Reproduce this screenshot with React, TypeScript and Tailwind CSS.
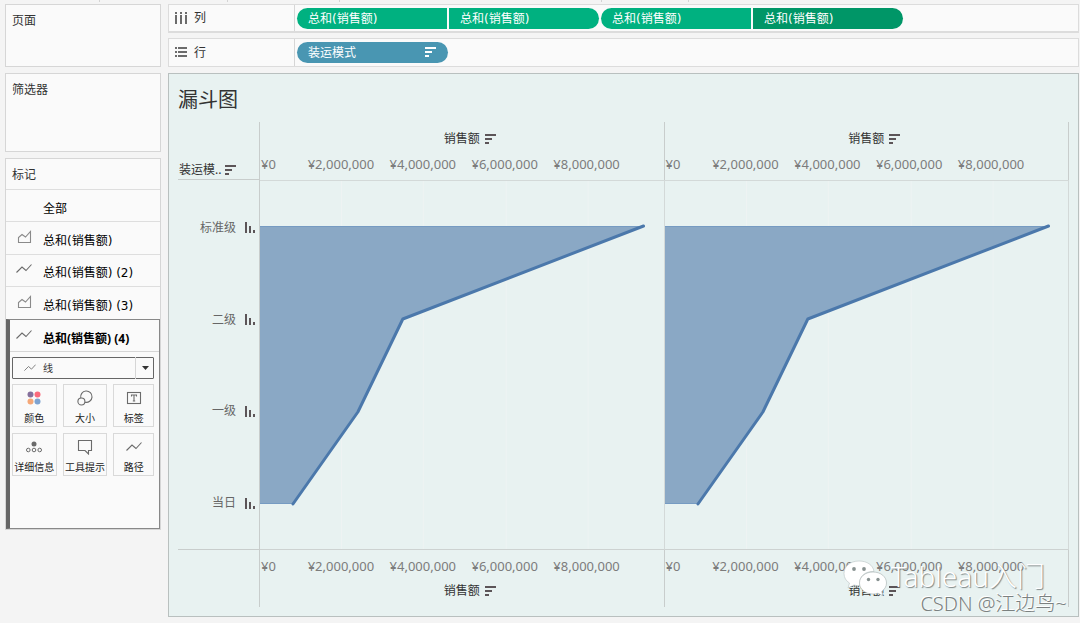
interface MarkCard {
  label: string;
  kind?: "area" | "line";
}

const markCards: MarkCard[] = [
  { label: "全部" },
  { label: "总和(销售额)", kind: "area" },
  { label: "总和(销售额) (2)", kind: "line" },
  { label: "总和(销售额) (3)", kind: "area" },
];

const columnPills = [
  { id: 1, className: "rounded-l-full bg-[#00b180]" },
  { id: 2, className: "rounded-r-full bg-[#00b180]" },
  { id: 3, className: "rounded-l-full bg-[#00b180]" },
  { id: 4, className: "rounded-r-full bg-[#009667]" },
];

const shipModes = ["标准级", "二级", "一级", "当日"];
const ticks = ["¥2,000,000", "¥4,000,000", "¥6,000,000", "¥8,000,000"];

function SortIcon({ className = "text-[#5c5558]" }: { className?: string }) {
  return (
    <svg className={`h-[11px] w-3 shrink-0 ${className}`} viewBox="0 0 12 11" fill="currentColor" aria-hidden="true">
      <rect x="0" y="0" width="11" height="2" />
      <rect x="0" y="4" width="7" height="2" />
      <rect x="0" y="8" width="4" height="2" />
    </svg>
  );
}

function BarsIcon() {
  return (
    <svg className="h-[11px] w-3 shrink-0" viewBox="0 0 12 11" fill="#5c5558" aria-hidden="true">
      <rect x="1" y="0" width="2" height="11" />
      <rect x="5" y="4" width="2" height="7" />
      <rect x="9" y="8" width="2" height="3" />
    </svg>
  );
}

function LineIcon({ className = "h-4 w-4" }: { className?: string }) {
  return (
    <svg className={`shrink-0 ${className}`} viewBox="0 0 16 16" fill="none" stroke="#6b6b6b" strokeWidth="1.1" aria-hidden="true">
      <path d="M0.5 11.5 6 6l4 3.5L15.5 3.5" />
    </svg>
  );
}

function AreaIcon() {
  return (
    <svg className="h-4 w-4 shrink-0" viewBox="0 0 16 16" fill="none" stroke="#8a8a8a" strokeWidth="1.1" aria-hidden="true">
      <path d="M2.5 13.5V8.5L6 5.5l3.5 2.5L14.5 2.5v11Z" />
    </svg>
  );
}

function ColorIcon() {
  return (
    <svg className="h-4 w-4" viewBox="0 0 16 16" aria-hidden="true">
      <circle cx="4.5" cy="4.5" r="3" fill="#85709c" />
      <circle cx="11.5" cy="4.5" r="3" fill="#fb6a7c" />
      <circle cx="4.5" cy="11.5" r="3" fill="#f5a878" />
      <circle cx="11.5" cy="11.5" r="3" fill="#7ea3d0" />
    </svg>
  );
}

function SizeIcon() {
  return (
    <svg className="h-4 w-4" viewBox="0 0 16 16" fill="none" stroke="#6b6b6b" strokeWidth="1.1" aria-hidden="true">
      <path d="M3.8 8A5.7 5.7 0 1 1 8 12.2" />
      <circle cx="4.4" cy="11.5" r="3.5" />
    </svg>
  );
}

function LabelIcon() {
  return (
    <svg className="h-4 w-4" viewBox="0 0 16 16" fill="none" stroke="#6b6b6b" strokeWidth="1.1" aria-hidden="true">
      <rect x="1.5" y="2.5" width="13" height="11" />
      <path d="M5.5 6.5V5h5v1.5M8 5v6M6.8 11h2.4" />
    </svg>
  );
}

function DetailIcon() {
  return (
    <svg className="h-4 w-4" viewBox="0 0 16 16" fill="none" stroke="#6b6b6b" strokeWidth="1" aria-hidden="true">
      <circle cx="8" cy="5" r="2.5" fill="#6b6b6b" stroke="none" />
      <circle cx="2.3" cy="11" r="1.8" />
      <circle cx="8" cy="11" r="1.8" />
      <circle cx="13.7" cy="11" r="1.8" />
    </svg>
  );
}

function TooltipIcon() {
  return (
    <svg className="h-4 w-4" viewBox="0 0 16 16" fill="none" stroke="#6b6b6b" strokeWidth="1.1" aria-hidden="true">
      <path d="M1.5 1.5h13v10h-3v3.5l-3.5-3.5h-6.5Z" />
    </svg>
  );
}

const markButtons = [
  { label: "颜色", icon: <ColorIcon /> },
  { label: "大小", icon: <SizeIcon /> },
  { label: "标签", icon: <LabelIcon /> },
  { label: "详细信息", icon: <DetailIcon /> },
  { label: "工具提示", icon: <TooltipIcon /> },
  { label: "路径", icon: <LineIcon /> },
];

function ToolbarEdge() {
  return (
    <div className="flex h-[2px]" aria-hidden="true">
      <div className="w-[100px] border-r border-[#d4d4d4]" />
      <div className="w-32 border-r border-[#d4d4d4]" />
      <div className="w-28 border-r border-[#d4d4d4]" />
      <div className="w-[262px] border-r border-[#d4d4d4]" />
      <div className="w-[87px] border-r border-[#d4d4d4]" />
    </div>
  );
}

function MarksPanel() {
  return (
    <section className="border border-[#d6d6d6] bg-[#fafafa]" aria-labelledby="marks-title">
      <h2 id="marks-title" className="h-[31px] border-b border-[#dedede] px-1.5 leading-8">标记</h2>
      <div className="grid h-[129px] grid-rows-4 font-['DejaVu_Sans','Noto_Sans_CJK_SC',sans-serif]">
        {markCards.map((card) => (
          <button
            key={card.label}
            type="button"
            className="flex items-center border-b border-[#dedede] pl-2.5 text-left text-black last:border-b-0"
          >
            <span className="mb-0.5 w-[27px]">
              {card.kind === "area" && <AreaIcon />}
              {card.kind === "line" && <LineIcon />}
            </span>
            <span className="pt-1.5">{card.label}</span>
          </button>
        ))}
      </div>
      <div className="min-h-[210px] border border-l-4 border-[#888888] border-l-[#666666] bg-[#fafafa]">
        <button type="button" className="flex h-8 w-full items-center border-b border-[#d6d6d6] pl-1.5 text-left font-bold text-black">
          <span className="mb-0.5 w-[27px]"><LineIcon /></span>
          <span className="pt-1.5">总和(销售额) (4)</span>
        </button>
        <div className="mt-[5px] mr-[5px] ml-[2px]">
          <div className="relative">
            <select
              aria-label="标记类型"
              className="block h-[22px] w-full appearance-none rounded-[1px] border border-[#666666] bg-[#fafafa] pl-[30px] text-[10px] text-[#333333]"
            >
              <option>线</option>
            </select>
            <div className="pointer-events-none absolute inset-0 flex items-center justify-between pl-3">
              <LineIcon className="h-3 w-3" />
              <span className="flex h-full w-[19px] items-center justify-center border-l border-[#d6d6d6]">
                <svg className="h-1 w-[7px]" viewBox="0 0 7 4" aria-hidden="true">
                  <path d="M0 0h7L3.5 4Z" fill="#333333" />
                </svg>
              </span>
            </div>
          </div>
          <div className="mt-[5px] grid grid-cols-[45fr_45fr_41fr] gap-1.5">
            {markButtons.map((button) => (
              <button
                key={button.label}
                type="button"
                className="flex h-[43px] flex-col items-center justify-between border border-[#d9d9d9] pt-[5px] text-[10px] leading-4 whitespace-nowrap text-[#222222]"
              >
                {button.icon}
                {button.label}
              </button>
            ))}
          </div>
        </div>
      </div>
    </section>
  );
}

function Shelves() {
  return (
    <>
      <section className="flex h-[29px] border border-b-2 border-[#dcdcdc] bg-[#fafafa]" aria-label="列">
        <div className="flex w-[126px] items-center gap-[7px] border-r border-[#d6d6d6] pl-1.5">
          <svg className="h-3 w-3" viewBox="0 0 12 12" fill="#6b6b6b" aria-hidden="true">
            <path d="M0 0h2v2H0zM5 0h2v2H5zM10 0h2v2h-2zM0 3h2v9H0zM5 3h2v9H5zM10 3h2v9h-2z" />
          </svg>
          列
        </div>
        <div className="flex items-center gap-[2px] pl-[2px] font-['DejaVu_Sans','Noto_Sans_CJK_SC',sans-serif]">
          {columnPills.map((pill) => (
            <button key={pill.id} type="button" className={`h-[21px] w-[150px] pt-px pl-[11px] text-left text-white ${pill.className}`}>
              总和(销售额)
            </button>
          ))}
        </div>
      </section>
      <section className="mt-[5px] flex h-[29px] border border-[#dcdcdc] bg-[#fafafa]" aria-label="行">
        <div className="flex w-[126px] items-center gap-[7px] border-r border-[#d6d6d6] pl-1.5">
          <svg className="h-3 w-3" viewBox="0 0 12 12" fill="#6b6b6b" aria-hidden="true">
            <path d="M0 0h2v2H0zM0 4h2v2H0zM0 8h2v2H0zM3 0h9v2H3zM3 4h9v2H3zM3 8h9v2H3z" />
          </svg>
          行
        </div>
        <div className="flex items-center pl-[2px]">
          <button type="button" className="flex h-[21px] w-[151px] items-center justify-between rounded-full bg-[#4996b2] pr-[11px] pl-[11px] text-white">
            装运模式
            <SortIcon className="text-white" />
          </button>
        </div>
      </section>
    </>
  );
}

function AxisTitle() {
  return (
    <div className="grid grid-cols-[1fr_auto_1fr] items-center gap-[5px] leading-[18px] text-[#333333]">
      <span />
      <span>销售额</span>
      <SortIcon />
    </div>
  );
}

function AxisTicks() {
  return (
    <div className="grid grid-cols-[40fr_82fr_82fr_82fr_82fr_36fr] text-center text-[13px] leading-[18px] whitespace-nowrap text-[#7c7c7c]">
      <span className="pl-px text-left">¥0</span>
      {ticks.map((tick) => (
        <span key={tick}>{tick}</span>
      ))}
    </div>
  );
}

function FunnelPane() {
  return (
    <div className="border-y border-r border-[#d3d9d8] border-b-[#cdd2d1]">
      <svg className="block h-full w-full" viewBox="0 0 404 368" preserveAspectRatio="none" role="img" aria-label="销售额漏斗">
        <path d="M81.5 0v368M163.5 0v368M246.5 0v368M328.5 0v368" stroke="#eef3f3" />
        <path d="M0 45H384L143 138L98 231L33 323H0Z" fill="#8aa8c5" />
        <path d="M0 45.5H384M0 322.5H33" stroke="#759bc2" />
        <path d="M384 45L143 138L98 231L33 323" fill="none" stroke="#4b78ab" strokeWidth="3" strokeLinecap="round" strokeLinejoin="round" />
      </svg>
    </div>
  );
}

function FunnelSheet() {
  return (
    <main className="mt-1.5 flex flex-1 flex-col border border-[#b9c0bf] bg-[#e8f2f1] px-[9px] pt-3 pb-[9px]">
      <h1 className="text-[20px] leading-7 text-[#333333]">漏斗图</h1>
      <div className="mt-2 grid flex-1 grid-cols-[82px_1fr_1fr] grid-rows-[58px_minmax(300px,1fr)_57px]">
        <div className="flex items-end gap-1 border-r border-b border-[#c8cdcc] pl-px text-[#333333]">
          <span className="leading-[18px]">装运模..</span>
          <span className="pb-[3px]"><SortIcon /></span>
        </div>
        <div className="flex flex-col justify-between border-r border-[#c8cdcc] pt-2 pb-[7px]">
          <AxisTitle />
          <AxisTicks />
        </div>
        <div className="flex flex-col justify-between border-r border-[#c8cdcc] pt-2 pb-[7px]">
          <AxisTitle />
          <AxisTicks />
        </div>

        <div className="grid grid-rows-4 border-r border-b border-[#c8cdcc] pt-[2px] text-[#666666]">
          {shipModes.map((mode) => (
            <div key={mode} className="flex items-center justify-end gap-2 pr-[3px]">
              <span>{mode}</span>
              <BarsIcon />
            </div>
          ))}
        </div>
        <FunnelPane />
        <FunnelPane />

        <div className="border-r border-[#c8cdcc]" />
        <div className="flex flex-col justify-between border-r border-[#c8cdcc] pt-[7px] pb-[7px]">
          <AxisTicks />
          <AxisTitle />
        </div>
        <div className="flex flex-col justify-between border-r border-[#c8cdcc] pt-[7px] pb-[7px]">
          <AxisTicks />
          <AxisTitle />
        </div>
      </div>
    </main>
  );
}

function Watermark() {
  return (
    <div className="pointer-events-none absolute right-[13px] bottom-[7px] flex flex-col items-end whitespace-nowrap">
      <div className="mr-[22px] flex items-center gap-1">
        <svg className="h-9 w-11" viewBox="0 0 44 36" aria-hidden="true">
          <path d="M16 1C7 1 1 6.5 1 13.5c0 4 2 7.5 5.5 9.5L5 28l6-3c2 .6 4 .8 6 .6C15 16 23 11 31 11.5 30 5 24 1 16 1Z" fill="#ffffff" stroke="#b9c3c2" strokeWidth="0.6" />
          <path d="M30 12c-8 0-13.5 5-13.5 11S22 34 30 34c2 0 3.5-.3 5-.8l5 2.6-1.3-4.3C41.5 29.5 43.5 26.5 43.5 23 43.5 17 38 12 30 12Z" fill="#ffffff" stroke="#a5afae" strokeWidth="0.6" />
          <g fill="#879190">
            <circle cx="11" cy="9" r="1.9" />
            <circle cx="21" cy="9" r="1.9" />
            <circle cx="25.5" cy="19.5" r="1.7" />
            <circle cx="35" cy="19.5" r="1.7" />
          </g>
        </svg>
        <span className="pb-1 text-[28px] leading-[34px] font-light text-white [text-shadow:1px_1px_1px_#7d8685]">Tableau入门</span>
      </div>
      <span className="-mt-[5px] text-[20px] leading-6 font-light text-[#7b8180] [text-shadow:-1px_-1px_0_#ffffff]">CSDN @江边鸟~</span>
    </div>
  );
}

export default function App() {
  return (
    <div className="relative flex min-h-screen flex-col bg-[#f4f4f4] pb-1.5 font-['Noto_Sans','Noto_Sans_CJK_SC',sans-serif] text-[12px] text-[#333333]">
      <ToolbarEdge />
      <div className="mt-[2px] flex flex-1 gap-[7px] pr-px pl-[5px]">
        <aside className="flex w-[156px] shrink-0 flex-col gap-1.5">
          <section className="h-[63px] border border-[#d6d6d6] bg-[#fafafa] px-1.5 pt-[7px]">
            <h2>页面</h2>
          </section>
          <section className="h-[79px] border border-[#d6d6d6] bg-[#fafafa] px-1.5 pt-[7px]">
            <h2>筛选器</h2>
          </section>
          <MarksPanel />
        </aside>
        <div className="flex min-w-0 flex-1 flex-col">
          <Shelves />
          <FunnelSheet />
        </div>
      </div>
      <Watermark />
    </div>
  );
}
